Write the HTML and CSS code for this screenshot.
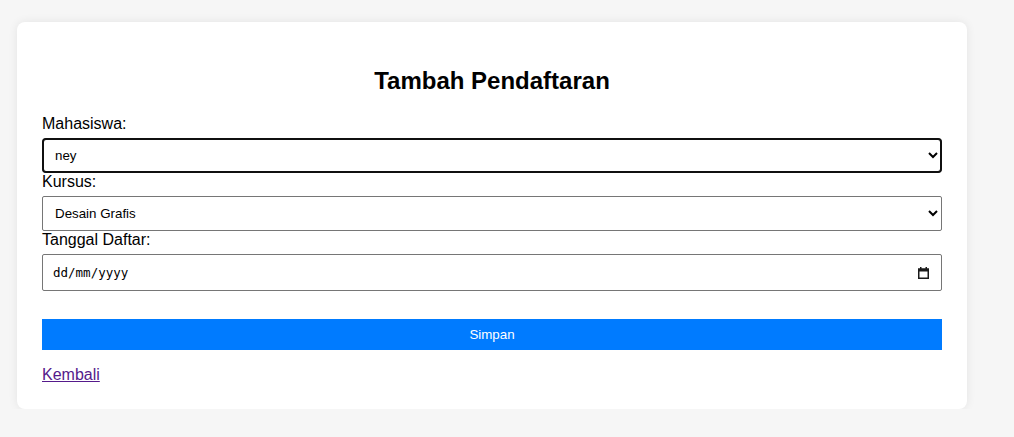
FILE: index.html
```html
<!DOCTYPE html>
<html lang="id">
<head>
<meta charset="utf-8">
<title>Tambah Pendaftaran</title>
<link rel="stylesheet" href="styles.css">
</head>
<body>
<div class="card">
  <h2 class="title">Tambah Pendaftaran</h2>
  <form class="form">
    <label class="label" for="mhs">Mahasiswa:</label>
    <select id="mhs" class="field field-focus">
      <option>ney</option>
    </select>
    <label class="label" for="kursus">Kursus:</label>
    <select id="kursus" class="field">
      <option>Desain Grafis</option>
    </select>
    <label class="label" for="tgl">Tanggal Daftar:</label>
    <div id="tgl" class="date-field">
      <span class="date-text">dd/mm/yyyy</span>
      <svg class="date-icon" width="11" height="12" viewBox="0 0 11 12" aria-hidden="true">
        <rect x="0.75" y="2.25" width="9.5" height="9" fill="none" stroke="#1a1a1a" stroke-width="1.5"/>
        <rect x="0" y="1.5" width="11" height="3" fill="#1a1a1a"/>
        <rect x="2" y="0" width="1.5" height="2" fill="#1a1a1a"/>
        <rect x="7.5" y="0" width="1.5" height="2" fill="#1a1a1a"/>
      </svg>
    </div>
    <button type="button" class="btn">Simpan</button>
  </form>
  <div class="back"><a href="#" class="back-link">Kembali</a></div>
</div>
</body>
</html>
```

FILE: styles.css
```css
html, body {
  margin: 0;
  padding: 0;
}
body {
  background: #f6f6f6;
  font-family: "Liberation Sans", Arial, sans-serif;
  color: #000;
  padding: 22px 0 0 17px;
}
.card {
  width: 900px;
  padding: 25px;
  background: #fff;
  border-radius: 8px;
  box-shadow: 0 0 10px rgba(0, 0, 0, 0.08);
}
.title {
  margin: 20px 0;
  font-size: 24px;
  font-weight: bold;
  text-align: center;
}
.form {
  margin: 0;
}
.label {
  display: block;
  font-size: 16px;
  margin-bottom: 5px;
}
.field {
  display: block;
  width: 100%;
  box-sizing: border-box;
  margin: 0;
  padding: 8px;
  font-family: "Liberation Sans", Arial, sans-serif;
  font-size: 13.33px;
  border: 1px solid #767676;
  border-radius: 2px;
  background: #fff;
  color: #000;
}
.field-focus {
  outline: 2px solid #101010;
  outline-offset: -2px;
  border-radius: 4px;
}
.date-field {
  display: flex;
  align-items: center;
  justify-content: space-between;
  box-sizing: border-box;
  height: 37px;
  padding: 0 12px 0 10px;
  border: 1px solid #767676;
  border-radius: 2px;
  background: #fff;
}
.date-text {
  font-family: "DejaVu Sans Mono", monospace;
  font-size: 12.5px;
  color: #000;
}
.date-icon {
  display: block;
}
.btn {
  display: block;
  width: 100%;
  margin-top: 28px;
  padding: 8px;
  border: none;
  background: #007bff;
  color: #fff;
  font-family: "Liberation Sans", Arial, sans-serif;
  font-size: 13.33px;
}
.back {
  margin-top: 16px;
  font-size: 16px;
}
.back-link {
  color: #551a8b;
  text-decoration: underline;
}
```
